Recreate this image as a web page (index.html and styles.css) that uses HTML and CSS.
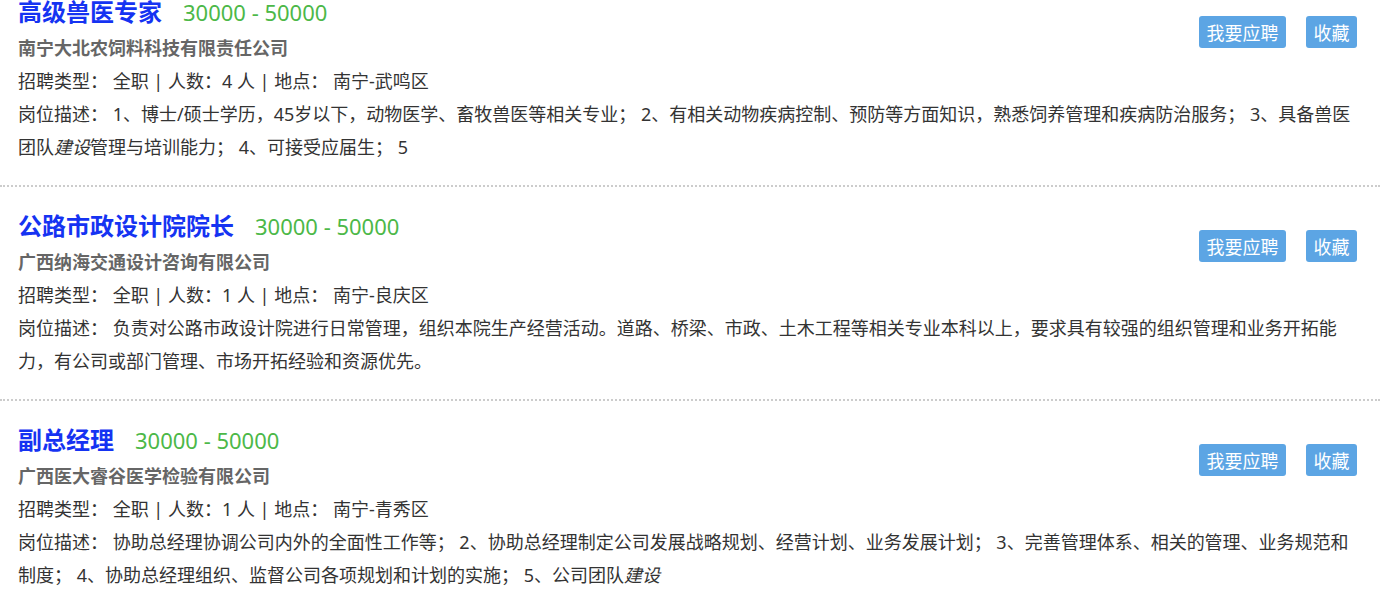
FILE: index.html
```html
<!DOCTYPE html>
<html lang="zh-CN">
<head>
    <meta charset="UTF-8">
    <meta name="viewport" content="width=device-width, initial-scale=1.0">
    <title>招聘信息</title>
    <link rel="stylesheet" href="styles.css">
</head>
<body>

    <div class="job-list">

        <div class="job-item">
            <div class="job-ops">
                <a class="btn" href="#">我要应聘</a>
                <a class="btn" href="#">收藏</a>
            </div>
            <div class="job-title">
                <a href="#">高级兽医专家</a>
                <span class="salary">30000 - 50000</span>
            </div>
            <div class="company">南宁大北农饲料科技有限责任公司</div>
            <div class="job-meta">招聘类型： 全职 | 人数：4 人 | 地点： 南宁-武鸣区</div>
            <div class="job-desc">岗位描述： 1、博士/硕士学历，45岁以下，动物医学、畜牧兽医等相关专业； 2、有相关动物疾病控制、预防等方面知识，熟悉饲养管理和疾病防治服务； 3、具备兽医团队<em>建设</em>管理与培训能力； 4、可接受应届生； 5</div>
        </div>

        <div class="job-item">
            <div class="job-ops">
                <a class="btn" href="#">我要应聘</a>
                <a class="btn" href="#">收藏</a>
            </div>
            <div class="job-title">
                <a href="#">公路市政设计院院长</a>
                <span class="salary">30000 - 50000</span>
            </div>
            <div class="company">广西纳海交通设计咨询有限公司</div>
            <div class="job-meta">招聘类型： 全职 | 人数：1 人 | 地点： 南宁-良庆区</div>
            <div class="job-desc">岗位描述： 负责对公路市政设计院进行日常管理，组织本院生产经营活动。道路、桥梁、市政、土木工程等相关专业本科以上，要求具有较强的组织管理和业务开拓能力，有公司或部门管理、市场开拓经验和资源优先。</div>
        </div>

        <div class="job-item">
            <div class="job-ops">
                <a class="btn" href="#">我要应聘</a>
                <a class="btn" href="#">收藏</a>
            </div>
            <div class="job-title">
                <a href="#">副总经理</a>
                <span class="salary">30000 - 50000</span>
            </div>
            <div class="company">广西医大睿谷医学检验有限公司</div>
            <div class="job-meta">招聘类型： 全职 | 人数：1 人 | 地点： 南宁-青秀区</div>
            <div class="job-desc">岗位描述： 协助总经理协调公司内外的全面性工作等； 2、协助总经理制定公司发展战略规划、经营计划、业务发展计划； 3、完善管理体系、相关的管理、业务规范和制度； 4、协助总经理组织、监督公司各项规划和计划的实施； 5、公司团队<em>建设</em></div>
        </div>

    </div>

</body>
</html>
```

FILE: styles.css
```css
body {
    margin: 0;
    font-family: "Noto Sans", "Noto Sans CJK SC", sans-serif;
    font-size: 18px;
    color: #333;
    background: #fff;
    overflow: hidden;
}
a {
    text-decoration: none;
}
.job-list {
    width: 1380px;
    margin-top: -27px; /* 页面已向下滚动 */
}
.job-item {
    padding: 23px 20px 21px 18px;
    border-bottom: 2px dotted #ccc;
}
.job-ops {
    float: right;
    display: flex;
    gap: 20px;
    margin-top: 20px;
    margin-right: 3px;
}
.btn {
    display: block;
    height: 32px;
    line-height: 32px;
    padding: 0 7.5px;
    background: #5ca5e4;
    color: #fff;
    border-radius: 3px;
    font-family: "Noto Sans CJK SC", sans-serif;
}
.job-title {
    display: flex;
    align-items: baseline;
    height: 36px;
    line-height: 30px;
}
.job-title a {
    font-size: 24px;
    font-weight: bold;
    color: #1533f2;
    font-family: "Noto Sans CJK SC", sans-serif;
}
.salary {
    margin-left: 21px;
    font-size: 22px;
    color: #4cb848;
}
.company {
    height: 33px;
    line-height: 33px;
    font-weight: bold;
    color: #666;
}
.job-meta, .job-desc {
    line-height: 33px;
}
.job-meta {
    height: 33px;
}
```
